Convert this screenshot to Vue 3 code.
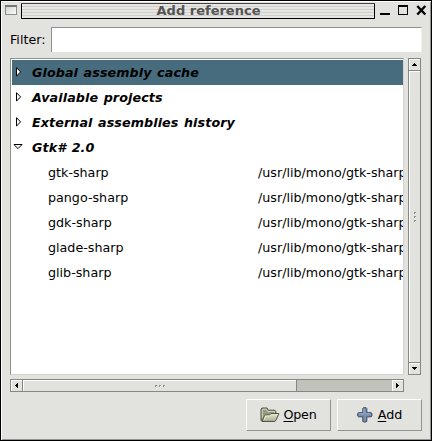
<script setup>
import { ref } from 'vue'

const filter = ref('')
const groups = [
  { name: 'Global assembly cache', selected: true, items: [] },
  { name: 'Available projects', items: [] },
  { name: 'External assemblies history', items: [] },
  {
    name: 'Gtk# 2.0',
    open: true,
    items: ['gtk-sharp', 'pango-sharp', 'gdk-sharp', 'glade-sharp', 'glib-sharp'],
  },
]
</script>

<template>
  <div class="window">
    <header class="titlebar">
      <svg class="winicon" width="13" height="11" viewBox="0 0 13 11">
        <defs>
          <linearGradient id="wi" x1="0" y1="0" x2="1" y2="1">
            <stop offset="0" stop-color="#c9cdd3" />
            <stop offset="1" stop-color="#ffffff" />
          </linearGradient>
        </defs>
        <rect x="0.5" y="0.5" width="11" height="9" fill="url(#wi)" stroke="#8c8c88" />
        <rect x="0" y="0" width="12" height="2" fill="#777774" />
      </svg>
      <div class="title">Add reference</div>
      <div class="controls">
        <svg width="50" height="14" viewBox="0 0 50 14" shape-rendering="crispEdges">
          <rect x="0" y="10" width="10" height="2" fill="#000" />
          <path d="M18 2h10v10h-10zM19 4v7h8v-7z" fill="#000" fill-rule="evenodd" />
          <path d="M37.300 3l8 8.500M45.300 3l-8 8.500" stroke="#000" stroke-width="2.4" shape-rendering="auto" />
        </svg>
      </div>
    </header>

    <label class="filter">
      <span>Filter:</span>
      <input v-model="filter" class="entry" type="text" />
    </label>

    <main class="scrolled">
      <div class="tree">
        <template v-for="g in groups" :key="g.name">
          <div class="row group" :class="{ selected: g.selected }">
            <svg class="expander" width="12" height="12" viewBox="0 0 12 12">
              <path v-if="g.open" d="M1.9 3.5h8.2L6 7.6z" fill="#fff" stroke="#000" />
              <path v-else d="M4.5 1.7v8.4L8.6 5.900z" fill="#fff" stroke="#000" />
            </svg>
            <span>{{ g.name }}</span>
          </div>
          <div v-for="item in g.items" :key="item" class="row item">
            <span class="name">{{ item }}</span>
            <span class="path">/usr/lib/mono/gtk-sharp</span>
          </div>
        </template>
      </div>

      <div class="bar vertical">
        <div class="step"><svg width="5" height="3" viewBox="0 0 5 3" shape-rendering="crispEdges"><path d="M2 0h1v1h1v1h1v1H0V2h1V1h1z" /></svg></div>
        <div class="thumb"><i></i><i></i><i></i></div>
        <div class="step"><svg width="5" height="3" viewBox="0 0 5 3" shape-rendering="crispEdges"><path d="M0 0h5v1H4v1H3v1H2V2H1V1H0z" /></svg></div>
      </div>

      <div class="bar horizontal">
        <div class="step"><svg width="3" height="5" viewBox="0 0 3 5" shape-rendering="crispEdges"><path d="M3 0v5H2V4H1V3H0V2h1V1h1V0z" /></svg></div>
        <div class="thumb"><i></i><i></i><i></i></div>
        <div class="step last"><svg width="3" height="5" viewBox="0 0 3 5" shape-rendering="crispEdges"><path d="M0 0h1v1h1v1h1v1H2v1H1v1H0z" /></svg></div>
      </div>
    </main>

    <footer class="actions">
      <button class="btn open">
        <svg width="20" height="16" viewBox="0 0 20 16">
          <defs>
            <linearGradient id="fo" x1="0" y1="0" x2="0" y2="1">
              <stop offset="0" stop-color="#dfe3c8" />
              <stop offset="1" stop-color="#aeb496" />
            </linearGradient>
          </defs>
          <path d="M1 13.2V2.2L2 1h5l1.2 2.2h6.6l1 1v3.3L14 14.3H2z" fill="#969b80" stroke="#4c4f42" />
          <path d="M2.3 11V3l.6-.8h3.5l1.2 2.2h6.8v3" fill="none" stroke="#d4d8c1" />
          <path d="M2 14.4L4.5 8.6l1-.7 4.3-.1 1.2-1.3h7.8l-.2 1-2.8 6-1 .9z" fill="url(#fo)" stroke="#4c4f42" />
          <path d="M4 13l1.6-4h4.7l1.2-1.3h5.6" fill="none" stroke="#edf0dd" stroke-width=".8" />
        </svg>
        <span><u>O</u>pen</span>
      </button>
      <button class="btn add">
        <svg width="16" height="16" viewBox="0 0 16 16">
          <path d="M5.8 1.5l.7-.8h2.6l.7.8v4.2h4.3l.8.7v2.7l-.8.7H9.8v4.4l-.7.8H6.5l-.7-.8V9.800H1.500l-.8-.7V6.400l.8-.7h4.300z" fill="#7590b3" stroke="#3c4858" />
          <path d="M7 2v4.800H2M8.500 6.800H13" fill="none" stroke="#9cb2cd" />
        </svg>
        <span><u>A</u>dd</span>
      </button>
    </footer>
  </div>
</template>

<style>
body {
  margin: 0;
  overflow: hidden;
}
</style>

<style scoped>
* {
  box-sizing: border-box;
}
.window {
  width: 432px;
  height: 441px;
  border: 1px solid #000;
  background: #e2e2de;
  box-shadow: inset 1px 1px #fff, inset -1px -1px #92948f;
  font: 12.7px/25px "DejaVu Sans", sans-serif;
  color: #000;
  display: flex;
  flex-direction: column;
}
.titlebar {
  display: flex;
  height: 18px;
  padding: 2px 0 0 4px;
  flex: none;
}
.winicon {
  margin: 2px 3px 0 0;
}
.title {
  width: 354px;
  height: 16px;
  margin-right: 5px;
  padding-left: 21px;
  border: 1px solid #000;
  border-top-color: #444;
  border-radius: 1px;
  background: repeating-linear-gradient(#e6e6e3 0 2px, #cfcfcb 2px 3px);
  color: #555;
  font-weight: bold;
  font-size: 13px;
  line-height: 13px;
  text-align: center;
}
.controls svg {
  display: block;
}
.filter {
  display: flex;
  margin: 8px 9px 0;
  height: 25px;
  flex: none;
}
.filter span {
  width: 41px;
}
.entry {
  width: 371px;
  height: 25px;
  border: 0;
  border-top: 1px solid #8d918c;
  border-left: 1px solid #8d918c;
  border-right: 1px solid #f0f0ee;
  background: #fff;
  font: inherit;
  outline: none;
}
.scrolled {
  display: grid;
  grid-template-columns: 394px 13px;
  grid-template-rows: 317px 13px;
  gap: 4px;
  margin: 6px 9px 0;
  flex: none;
}
.tree {
  background: #fff;
  border: 1px solid #d5d5d0;
  border-top-color: #8d918c;
  border-left-color: #8d918c;
  padding: 1px 0 0 1px;
  overflow: hidden;
}
.row {
  height: 25px;
  display: flex;
  white-space: nowrap;
}
.group {
  font-weight: bold;
  font-style: oblique;
  letter-spacing: 0.1px;
  word-spacing: 1px;
}
.selected {
  background: #466c7e;
}
.expander {
  margin: 6px 8px 0 0;
  flex: none;
}
.item {
  padding-left: 36px;
  line-height: 26px;
}
.name {
  width: 210px;
  flex: none;
}
.bar {
  display: flex;
  background: #c1c2bc;
  border: 1px solid #858881;
}
.vertical {
  flex-direction: column;
}
.step,
.thumb {
  background: #e2e2de;
  box-shadow: inset 1px 1px #fff;
  display: flex;
  align-items: center;
  justify-content: center;
  flex: none;
}
.step {
  width: 11px;
  height: 11px;
}
.thumb {
  gap: 2px;
}
.vertical .thumb {
  flex: 1;
  flex-direction: column;
  border-top: 1px solid #858881;
  border-bottom: 1px solid #858881;
}
.horizontal .thumb {
  width: 275px;
  border-left: 1px solid #858881;
  border-right: 1px solid #858881;
}
.thumb i {
  width: 2px;
  height: 2px;
  background: #fff;
  border-top: 1px solid #8d918c;
  border-left: 1px solid #8d918c;
}
.last {
  margin-left: auto;
}
.actions {
  display: flex;
  justify-content: flex-end;
  gap: 6px;
  margin: 7px 9px 0;
}
.btn {
  width: 85px;
  height: 32px;
  padding: 0 0 1px;
  border: 1px solid;
  border-color: #fff #92958e #92958e #fff;
  background: #e2e2de;
  color: #000;
  font: inherit;
  display: flex;
  align-items: center;
  justify-content: center;
  gap: 3px;
}
.open {
  letter-spacing: -0.2px;
}
.add {
  gap: 5px;
}
u {
  text-underline-offset: 2px;
}
</style>
